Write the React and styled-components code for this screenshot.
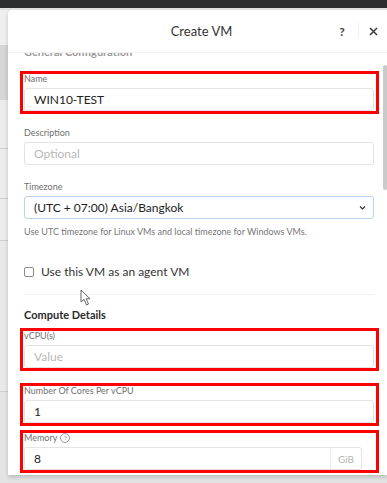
import React from "react";
import styled, { createGlobalStyle } from "styled-components";

const GlobalStyle = createGlobalStyle`
  body {
    margin: 0;
    background: #e2e2e2;
    font-family: Lato, "Open Sans", sans-serif;
  }
`;

const Page = styled.div`
  width: 387px;
  height: 483px;
  overflow: hidden;
  display: flex;
  flex-direction: column;
  background: #e2e2e2;
`;

const TopBar = styled.div`
  height: 8px;
  flex: none;
  background: #2b2d31;
`;

const Stage = styled.div`
  display: flex;
  padding-top: 2px;
`;

const Backdrop = styled.div`
  width: 8px;
  flex: none;
  display: flex;
  flex-direction: column;
`;

const BackdropBand = styled.div`
  height: ${(p) => p.$h}px;
  background: ${(p) => p.$bg};
  border-bottom: ${(p) => (p.$line ? "1px solid #cfcfcf" : "none")};
  flex: none;
`;

const Modal = styled.div`
  flex: 1;
  height: 465px;
  background: #fff;
  border-top-left-radius: 4px;
  box-shadow: 0 2px 4px rgba(0, 0, 0, 0.18);
  display: flex;
  flex-direction: column;
  overflow: hidden;
  position: relative;
`;

const Header = styled.div`
  height: 42px;
  flex: none;
  border-bottom: 1px solid #efefef;
  display: grid;
  grid-template-columns: 1fr auto 1fr;
  align-items: center;
  position: relative;
  z-index: 1;
  background: #fff;
`;

const Title = styled.div`
  grid-column: 2;
  font-size: 13px;
  color: #333;
  padding-left: 8px;
`;

const Actions = styled.div`
  grid-column: 3;
  justify-self: end;
  display: flex;
  align-items: center;
  height: 16px;
`;

const IconButton = styled.div`
  width: ${(p) => p.$w}px;
  height: 16px;
  display: flex;
  align-items: center;
  justify-content: center;
  font-size: 12px;
  font-weight: 700;
  color: #3a3f47;
  border-left: ${(p) => (p.$divider ? "1px solid #eee" : "none")};
`;

const Body = styled.div`
  flex: 1;
  display: flex;
  overflow: hidden;
`;

const Content = styled.div`
  flex: 1;
  padding: 0 9px 0 16px;
  display: flex;
  flex-direction: column;
`;

const Track = styled.div`
  width: 4px;
  flex: none;
  padding-top: 12px;
`;

const Thumb = styled.div`
  height: 125px;
  background: #cacaca;
  border-radius: 2px;
`;

const SectionFaded = styled.div`
  font-size: 11px;
  font-weight: 700;
  color: #9a9a9a;
  line-height: 12px;
  margin-top: -7px;
  margin-bottom: 13px;
`;

const Field = styled.div`
  margin: ${(p) => p.$mt || 0}px -5px 0 -4px;
  border: 3px solid ${(p) => (p.$marked ? "#ff0000" : "transparent")};
  padding: 0 2px 0 1px;
  display: flex;
  flex-direction: column;
`;

const Label = styled.div`
  font-size: 9px;
  line-height: 10px;
  color: #707070;
  height: 14px;
  display: flex;
  align-items: flex-start;
  gap: 3px;
`;

const InputBox = styled.div`
  height: 23px;
  box-sizing: border-box;
  border: 1px solid ${(p) => (p.$focus ? "#b9d3ee" : "#e3e3e3")};
  border-radius: 3px;
  display: flex;
  align-items: center;
  padding-left: 9px;
  font-size: 12px;
  color: ${(p) => (p.$placeholder ? "#b8b8b8" : "#222")};
  width: ${(p) => (p.$w ? `${p.$w}px` : "auto")};
`;

const InputText = styled.span`
  flex: 1;
`;

const Chevron = styled.svg`
  width: 7px;
  height: 7px;
  margin-right: 7px;
`;

const Suffix = styled.span`
  width: 30px;
  align-self: stretch;
  border-left: 1px solid #ececec;
  display: flex;
  align-items: center;
  justify-content: center;
  font-size: 10px;
  color: #b4b4b4;
`;

const Help = styled.div`
  font-size: 9px;
  color: #777;
  margin-top: 4px;
`;

const CheckRow = styled.label`
  display: flex;
  align-items: center;
  gap: 7px;
  margin-top: 27px;
  font-size: 12px;
  color: #333;
`;

const CheckBox = styled.span`
  width: 8px;
  height: 8px;
  border: 1px solid #8a8a8a;
  border-radius: 2px;
`;

const Divider = styled.div`
  height: 1px;
  background: #f0f0f0;
  margin-top: 15px;
`;

const SectionTitle = styled.div`
  font-size: 11px;
  font-weight: 700;
  color: #2a2a2a;
  margin-top: 13px;
  margin-bottom: 6px;
  line-height: 14px;
`;

const HelpIcon = styled.span`
  width: 8px;
  height: 8px;
  border: 1px solid #9a9a9a;
  border-radius: 50%;
  font-size: 6px;
  line-height: 8px;
  text-align: center;
  color: #8a8a8a;
`;

const Cursor = styled.svg`
  position: absolute;
  left: 72px;
  top: 279px;
  width: 12px;
  height: 17px;
`;

const backdrop = [
  { h: 35, bg: "#efefef" },
  { h: 55, bg: "#d6d6d6" },
  { h: 48, bg: "#ececec", line: true },
  { h: 49, bg: "#ececec", line: true },
  { h: 41, bg: "#ececec", line: true },
  { h: 150, bg: "#e9e9e9", line: true },
  { h: 90, bg: "#e4e4e4" },
];

export default function App() {
  return (
    <>
      <GlobalStyle />
      <Page>
        <TopBar />
        <Stage>
          <Backdrop>
            {backdrop.map((b, i) => (
              <BackdropBand key={i} $h={b.h} $bg={b.bg} $line={b.line} />
            ))}
          </Backdrop>
          <Modal>
            <Header>
              <Title>Create VM</Title>
              <Actions>
                <IconButton $w={32}>?</IconButton>
                <IconButton $w={28} $divider>
                  <svg width="9" height="9" viewBox="0 0 9 9">
                    <path d="M1 1L8 8M8 1L1 8" stroke="#3a3f47" strokeWidth="1.6" />
                  </svg>
                </IconButton>
              </Actions>
            </Header>
            <Body>
              <Content>
                <SectionFaded>General Configuration</SectionFaded>
                <Field $marked>
                  <Label>Name</Label>
                  <InputBox>WIN10-TEST</InputBox>
                </Field>
                <Field $mt={11}>
                  <Label>Description</Label>
                  <InputBox $placeholder>Optional</InputBox>
                </Field>
                <Field $mt={11}>
                  <Label>Timezone</Label>
                  <InputBox $focus>
                    <InputText>(UTC + 07:00) Asia/Bangkok</InputText>
                    <Chevron viewBox="0 0 7 7">
                      <path d="M1 2.5L3.5 5L6 2.5" fill="none" stroke="#333" strokeWidth="1.2" />
                    </Chevron>
                  </InputBox>
                </Field>
                <Help>Use UTC timezone for Linux VMs and local timezone for Windows VMs.</Help>
                <CheckRow>
                  <CheckBox />
                  Use this VM as an agent VM
                </CheckRow>
                <Divider />
                <SectionTitle>Compute Details</SectionTitle>
                <Field $marked>
                  <Label>vCPU(s)</Label>
                  <InputBox $placeholder>Value</InputBox>
                </Field>
                <Field $marked $mt={12}>
                  <Label>Number Of Cores Per vCPU</Label>
                  <InputBox>1</InputBox>
                </Field>
                <Field $marked $mt={4}>
                  <Label>
                    Memory <HelpIcon>?</HelpIcon>
                  </Label>
                  <InputBox $w={338}>
                    <InputText>8</InputText>
                    <Suffix>GiB</Suffix>
                  </InputBox>
                </Field>
              </Content>
              <Track>
                <Thumb />
              </Track>
            </Body>
            <Cursor viewBox="0 0 12 17">
              <path
                d="M1 1L1 13L4 10.5L6.5 16L8.5 15L6 9.8L10 9.8Z"
                fill="#fff"
                stroke="#555"
                strokeWidth="0.9"
                strokeLinejoin="round"
              />
            </Cursor>
          </Modal>
        </Stage>
      </Page>
    </>
  );
}
